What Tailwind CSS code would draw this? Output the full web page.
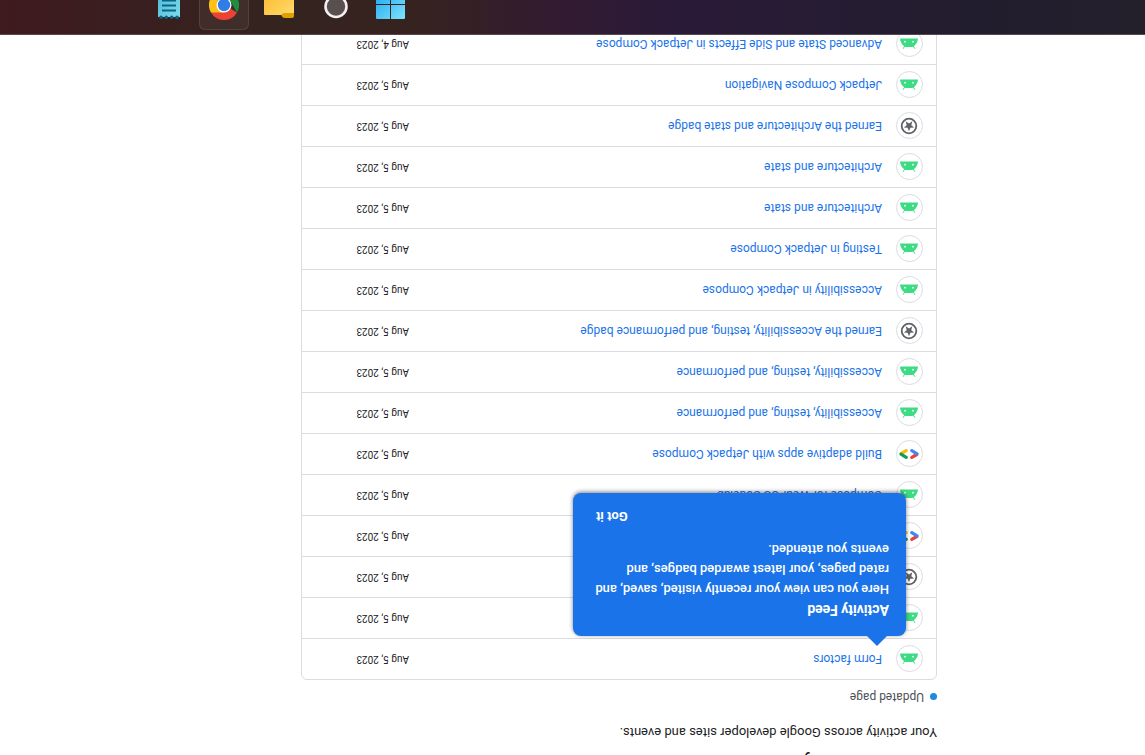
<!DOCTYPE html>
<html lang="en">
<head>
<meta charset="utf-8">
<meta name="viewport" content="width=device-width, initial-scale=1">
<title>Recent activity</title>
<script src="https://cdn.jsdelivr.net/npm/@tailwindcss/browser@4"></script>
</head>
<body class="bg-white">
<svg class="hidden" aria-hidden="true">
  <symbol id="android" viewBox="0 0 18 11">
    <path d="M0 10.500C.2 8 1.300 5.300 3.300 3.600 4.700 2.400 5.500 2 7 2h4c1.500 0 2.300.400 3.700 1.600 2 1.700 3.100 4.400 3.300 6.900z" fill="#3ddc84"/>
    <path d="M3.300.6l1.900 3.200M14.700.6l-1.900 3.200" stroke="#3ddc84" stroke-width="1" stroke-linecap="round"/>
    <circle cx="5" cy="7.300" r=".9" fill="#fff"/><circle cx="13" cy="7.300" r=".9" fill="#fff"/>
  </symbol>
  <symbol id="badge" viewBox="0 0 18 18">
    <circle cx="9" cy="9" r="7.300" fill="none" stroke="#5f6368" stroke-width="1.800"/>
    <path d="M9 3.800l1.400 3.400 3.800.250-2.900 2.400 1 3.800L9 11.600l-3.300 2.050 1-3.800L3.800 7.450l3.800-.250z" fill="#5f6368"/>
  </symbol>
  <symbol id="codelab" viewBox="0 0 20 12">
    <g fill="none" stroke-width="3.200" stroke-linecap="round">
      <path d="M12.800 9.400L17.800 6.500" stroke="#fbbc04"/>
      <path d="M12.800 2.600L18 5.900" stroke="#0f9d58"/>
      <path d="M7.200 2.600L2.200 5.500" stroke="#ea4335"/>
      <path d="M7.200 9.400L2 6.100" stroke="#4285f4"/>
    </g>
  </symbol>
</svg>

<div class="flex h-screen rotate-180 flex-col overflow-hidden bg-white font-['Roboto',sans-serif] text-[#202124]">
  <main class="min-h-0 flex-1 overflow-hidden pr-6 pl-[208px]">
    <div class="w-full max-w-[636px]">
      <h1 class="-mt-5 h-6 text-[21px] leading-6">Recent activity</h1>
      <p class="pt-[9px] text-[13px] leading-5">Your activity across Google developer sites and events.</p>
      <p class="mt-4 flex items-center gap-1.5 text-xs leading-[18px] text-[#4d5156]"><span class="size-[7px] rounded-full bg-[#1e88e5]"></span>Updated page</p>

      <div class="relative mt-2 rounded-md border border-[#dadce0]">
        <table class="w-full table-fixed border-separate border-spacing-0 text-left text-xs [&_a]:text-[#1a73e8] [&_td]:border-b [&_td]:border-[#dadce0] [&_td]:p-0 [&_td:last-child]:w-[107px] [&_td:last-child]:text-[10px] [&_th]:w-[54px] [&_th]:border-b [&_th]:border-[#dadce0] [&_th]:py-0 [&_th]:pr-0 [&_th]:pl-[13px] [&_th>span]:flex [&_th>span]:size-[27px] [&_th>span]:items-center [&_th>span]:justify-center [&_th>span]:rounded-full [&_th>span]:border [&_th>span]:border-[#dadce0] [&_tr]:h-[41px]">
          <tbody>
            <tr><th><span><svg class="h-[11px] w-[18px]"><use href="#android"/></svg></span></th><td><a href="#">Form factors</a></td><td>Aug 5, 2023</td></tr>
            <tr><th><span><svg class="h-[11px] w-[18px]"><use href="#android"/></svg></span></th><td></td><td>Aug 5, 2023</td></tr>
            <tr><th><span><svg class="size-[18px]"><use href="#badge"/></svg></span></th><td></td><td>Aug 5, 2023</td></tr>
            <tr><th><span><svg class="h-3 w-5"><use href="#codelab"/></svg></span></th><td></td><td>Aug 5, 2023</td></tr>
            <tr><th><span><svg class="h-[11px] w-[18px]"><use href="#android"/></svg></span></th><td><a href="#">Compose for Wear OS Codelab</a></td><td>Aug 5, 2023</td></tr>
            <tr><th><span><svg class="h-3 w-5"><use href="#codelab"/></svg></span></th><td><a href="#">Build adaptive apps with Jetpack Compose</a></td><td>Aug 5, 2023</td></tr>
            <tr><th><span><svg class="h-[11px] w-[18px]"><use href="#android"/></svg></span></th><td><a href="#">Accessibility, testing, and performance</a></td><td>Aug 5, 2023</td></tr>
            <tr><th><span><svg class="h-[11px] w-[18px]"><use href="#android"/></svg></span></th><td><a href="#">Accessibility, testing, and performance</a></td><td>Aug 5, 2023</td></tr>
            <tr><th><span><svg class="size-[18px]"><use href="#badge"/></svg></span></th><td><a href="#">Earned the Accessibility, testing, and performance badge</a></td><td>Aug 5, 2023</td></tr>
            <tr><th><span><svg class="h-[11px] w-[18px]"><use href="#android"/></svg></span></th><td><a href="#">Accessibility in Jetpack Compose</a></td><td>Aug 5, 2023</td></tr>
            <tr><th><span><svg class="h-[11px] w-[18px]"><use href="#android"/></svg></span></th><td><a href="#">Testing in Jetpack Compose</a></td><td>Aug 5, 2023</td></tr>
            <tr><th><span><svg class="h-[11px] w-[18px]"><use href="#android"/></svg></span></th><td><a href="#">Architecture and state</a></td><td>Aug 5, 2023</td></tr>
            <tr><th><span><svg class="h-[11px] w-[18px]"><use href="#android"/></svg></span></th><td><a href="#">Architecture and state</a></td><td>Aug 5, 2023</td></tr>
            <tr><th><span><svg class="size-[18px]"><use href="#badge"/></svg></span></th><td><a href="#">Earned the Architecture and state badge</a></td><td>Aug 5, 2023</td></tr>
            <tr><th><span><svg class="h-[11px] w-[18px]"><use href="#android"/></svg></span></th><td><a href="#">Jetpack Compose Navigation</a></td><td>Aug 5, 2023</td></tr>
            <tr><th><span><svg class="h-[11px] w-[18px]"><use href="#android"/></svg></span></th><td><a href="#">Advanced State and Side Effects in Jetpack Compose</a></td><td>Aug 4, 2023</td></tr>
          </tbody>
        </table>

        <!-- Onboarding callout pointing at the first row -->
        <div class="absolute top-[43px] left-[30px] w-[333px] rounded-lg bg-[#1a73e8] px-[17px] pt-4 pb-3 text-[13px] leading-5 font-medium text-white shadow-[0_1px_4px_rgba(0,0,0,0.5)]">
          <svg class="absolute -top-2.5 left-[18px] h-[11px] w-[22px]" viewBox="0 0 22 11" aria-hidden="true"><path d="M0 11L11 0l11 11z" fill="#1a73e8"/></svg>
          <h2 class="text-sm leading-[21px] font-bold">Activity Feed</h2>
          <p>Here you can view your recently visited, saved, and rated pages, your latest awarded badges, and events you attended.</p>
          <div class="flex justify-end pt-3 pr-[6px]"><button type="button" class="text-[13px] leading-[22px] font-bold">Got it</button></div>
        </div>
      </div>
    </div>
  </main>

  <nav aria-label="Taskbar" class="flex h-[35px] shrink-0 items-start justify-end overflow-hidden border-t border-[#554850] bg-[linear-gradient(to_right,#231f2b_0%,#221d2e_15%,#2a1a38_42%,#331b30_52%,#36231f_64%,#35231f_78%,#3f1a1f_100%)] pr-[158px]">
    <button type="button" aria-label="Start" class="mt-[15px] mr-[27px]">
      <svg class="size-[29px]" viewBox="0 0 29 29"><defs><linearGradient id="w" x1="0" y1="0" x2="1" y2="1"><stop offset="0" stop-color="#7fe3fc"/><stop offset="1" stop-color="#1aa5f2"/></linearGradient></defs><path d="M0 1q0-1 1-1h13v14H0zM15 0h13q1 0 1 1v13H15zM0 15h14v14H0zM15 15h14v14H15z" fill="url(#w)"/></svg>
    </button>
    <button type="button" aria-label="Search" class="mt-[15px] mr-[27px]">
      <svg class="size-[28px]" viewBox="0 0 28 28"><circle cx="13" cy="12.500" r="10.500" fill="#5a4f4f" stroke="#f1eff0" stroke-width="2.600"/><path d="M21 21l5 5" stroke="#f1eff0" stroke-width="3" stroke-linecap="round"/></svg>
    </button>
    <button type="button" aria-label="File Explorer" class="mt-4 mr-[15px]">
      <svg class="h-[26px] w-[30px]" viewBox="0 0 30 26"><defs><linearGradient id="f" x1="0" y1="0" x2="1" y2="1"><stop offset="0" stop-color="#ffdc6e"/><stop offset="1" stop-color="#fbb92b"/></linearGradient></defs><path d="M0 6V2q0-2 2-2h7q2 0 3 1.500l2 3.500V7z" fill="#e0a000"/><path d="M0 5h9q2 0 3-1l1-1h16q1 0 1 1v22H0z" fill="url(#f)"/></svg>
    </button>
    <button type="button" aria-label="Google Chrome" class="mt-1 mr-[19px] flex h-[50px] w-[50px] items-start justify-center rounded-md border border-white/10 bg-white/5 pt-[9px]">
      <svg class="size-[30px] shrink-0" viewBox="0 0 30 30"><path d="M15 15L2 7.500A15 15 0 0 1 28 7.500z" fill="#ea4335"/><path d="M15 7.500H28A15 15 0 0 1 15 30L21.500 18.700z" fill="#fbc116"/><path d="M2 7.500A15 15 0 0 0 15 30L21.500 18.700 8.500 18.700z" fill="#1e8e3e"/><circle cx="15" cy="15" r="7.500" fill="#fff"/><circle cx="15" cy="15" r="6.200" fill="#2f7de9"/></svg>
    </button>
    <button type="button" aria-label="Notepad" class="mt-[14px]">
      <svg class="h-[28px] w-[22px]" viewBox="0 0 22 28"><defs><linearGradient id="n" x1="0" y1="0" x2="1" y2="1"><stop offset="0" stop-color="#7bdcec"/><stop offset="1" stop-color="#4fb8d6"/></linearGradient></defs><path d="M0 3h22v25H0z" fill="url(#n)"/><g fill="#0b6483"><circle cx="3" cy="2.800" r="1.800"/><circle cx="8.300" cy="2.800" r="1.800"/><circle cx="13.700" cy="2.800" r="1.800"/><circle cx="19" cy="2.800" r="1.800"/><path d="M4 8.500h14v2H4zM4 13.500h14v2H4zM4 18.500h14v2H4z"/></g></svg>
    </button>
  </nav>
</div>
</body>
</html>
